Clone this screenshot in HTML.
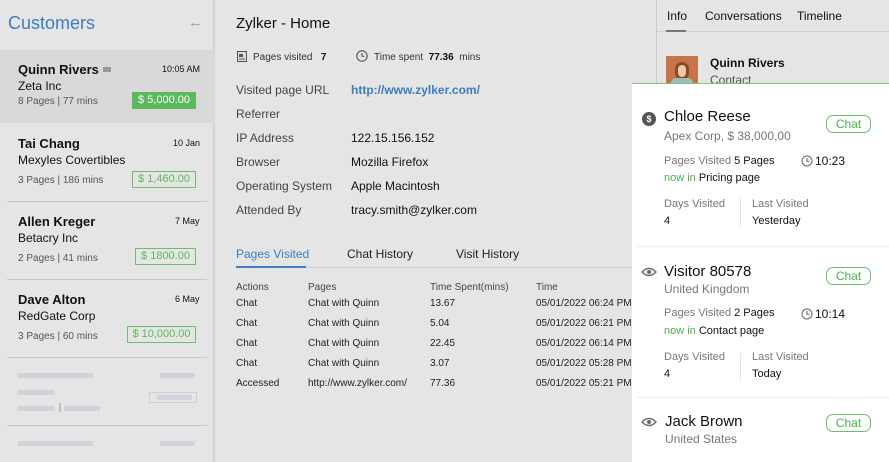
<!DOCTYPE html>
<html><head><meta charset="utf-8"><style>
*{margin:0;padding:0;box-sizing:border-box}
body{width:889px;height:462px;overflow:hidden;background:#e5e5e5;font-family:"Liberation Sans",sans-serif;color:#111;position:relative}
.a{position:absolute;white-space:nowrap}
.g{color:#555}
.tag{position:absolute;font-size:11px;color:#5cb85c;border:1px solid #6cc06c;text-align:center;height:17px;line-height:15px}
.bar{position:absolute;height:5px;background:#cfd3da}
.lbl{font-size:12px;color:#444}
.val{font-size:12px;color:#111}
.t{font-size:10px;color:#222}
.chat{position:absolute;left:826px;width:45px;height:18px;border:1px solid #6cc06c;border-radius:7px;color:#4cae4c;font-size:12px;text-align:center;line-height:16px}
</style></head><body>
<div class="a" style="left:0;top:0;width:215px;height:462px;background:#e5e5e5;border-right:2px solid #d2d2d2"></div>
<div class="a" style="left:8px;top:13px;font-size:18px;color:#3e7cc0">Customers</div>
<div class="a" style="left:188px;top:14px;font-size:15px;color:#999">←</div>
<div class="a" style="left:0;top:50px;width:215px;height:73px;background:#d9d9d9"></div>

<div class="a" style="left:18px;top:62px;font-size:13px;font-weight:bold">Quinn Rivers</div>
<div class="a" style="left:103px;top:67px;width:8px;height:5px;background:#999"></div>
<div class="a" style="left:162px;top:64px;font-size:9px">10:05 AM</div>
<div class="a" style="left:18px;top:79px;font-size:12px">Zeta Inc</div>
<div class="a g" style="left:18px;top:96px;font-size:10px">8 Pages | 77 mins</div>
<div class="tag" style="left:132px;top:92px;width:64px;background:#5cb85c;color:#fff;border-color:#5cb85c">$ 5,000.00</div>

<div class="a" style="left:18px;top:136px;font-size:13px;font-weight:bold">Tai Chang</div>
<div class="a" style="left:173px;top:138px;font-size:9px">10 Jan</div>
<div class="a" style="left:18px;top:153px;font-size:12px">Mexyles Covertibles</div>
<div class="a g" style="left:18px;top:175px;font-size:10px">3 Pages | 186 mins</div>
<div class="tag" style="left:132px;top:171px;width:64px">$ 1,460.00</div>
<div class="a" style="left:7px;top:201px;width:200px;height:1px;background:#c8c8c8"></div>

<div class="a" style="left:18px;top:214px;font-size:13px;font-weight:bold">Allen Kreger</div>
<div class="a" style="left:175px;top:216px;font-size:9px">7 May</div>
<div class="a" style="left:18px;top:231px;font-size:12px">Betacry Inc</div>
<div class="a g" style="left:18px;top:253px;font-size:10px">2 Pages | 41 mins</div>
<div class="tag" style="left:135px;top:248px;width:61px">$ 1800.00</div>
<div class="a" style="left:7px;top:279px;width:200px;height:1px;background:#c8c8c8"></div>

<div class="a" style="left:18px;top:292px;font-size:13px;font-weight:bold">Dave Alton</div>
<div class="a" style="left:175px;top:294px;font-size:9px">6 May</div>
<div class="a" style="left:18px;top:309px;font-size:12px">RedGate Corp</div>
<div class="a g" style="left:18px;top:331px;font-size:10px">3 Pages | 60 mins</div>
<div class="tag" style="left:127px;top:326px;width:69px">$ 10,000.00</div>
<div class="a" style="left:7px;top:357px;width:200px;height:1px;background:#c8c8c8"></div>

<div class="bar" style="left:18px;top:373px;width:75px"></div>
<div class="bar" style="left:160px;top:373px;width:35px"></div>
<div class="bar" style="left:18px;top:390px;width:36px"></div>
<div class="a" style="left:149px;top:392px;width:48px;height:11px;border:1px solid #d0d0d0"></div>
<div class="bar" style="left:157px;top:395px;width:35px"></div>
<div class="bar" style="left:18px;top:406px;width:36px"></div>
<div class="a" style="left:59px;top:403px;width:2px;height:9px;background:#b8c0cc"></div>
<div class="bar" style="left:64px;top:406px;width:36px"></div>
<div class="a" style="left:7px;top:425px;width:200px;height:1px;background:#c8c8c8"></div>
<div class="bar" style="left:18px;top:441px;width:75px"></div>
<div class="bar" style="left:160px;top:441px;width:35px"></div>

<div class="a" style="left:236px;top:15px;font-size:15px">Zylker - Home</div>
<svg class="a" style="left:237px;top:51px" width="10" height="11"><rect x="0.5" y="0.5" width="9" height="10" fill="#ddd" stroke="#555"/><rect x="2" y="3" width="4" height="3" fill="#555"/><path d="M2 8h6" stroke="#555"/></svg>
<div class="a" style="left:253px;top:52px;font-size:10px;color:#333">Pages visited &nbsp;&nbsp;<b style="color:#111">7</b></div>
<svg class="a" style="left:356px;top:50px" width="12" height="12"><circle cx="6" cy="6" r="5.2" fill="none" stroke="#444"/><path d="M6 3v3.3h2.5" fill="none" stroke="#444"/></svg>
<div class="a" style="left:374px;top:52px;font-size:10px;color:#333">Time spent &nbsp;<b style="color:#111">77.36</b> &nbsp;mins</div>

<div class="a lbl" style="left:236px;top:83px">Visited page URL</div>
<div class="a" style="left:351px;top:83px;font-size:12px;font-weight:bold;color:#3e7cc0">http://www.zylker.com/</div>
<div class="a lbl" style="left:236px;top:107px">Referrer</div>
<div class="a lbl" style="left:236px;top:131px">IP Address</div><div class="a val" style="left:351px;top:131px">122.15.156.152</div>
<div class="a lbl" style="left:236px;top:155px">Browser</div><div class="a val" style="left:351px;top:155px">Mozilla Firefox</div>
<div class="a lbl" style="left:236px;top:179px">Operating System</div><div class="a val" style="left:351px;top:179px">Apple Macintosh</div>
<div class="a lbl" style="left:236px;top:203px">Attended By</div><div class="a val" style="left:351px;top:203px">tracy.smith@zylker.com</div>

<div class="a" style="left:236px;top:267px;width:396px;height:1px;background:#d0d0d0"></div>
<div class="a" style="left:236px;top:247px;font-size:12px;color:#3e7cc0">Pages Visited</div>
<div class="a" style="left:236px;top:266px;width:70px;height:2px;background:#3e7cc0"></div>
<div class="a" style="left:347px;top:247px;font-size:12px;color:#222">Chat History</div>
<div class="a" style="left:456px;top:247px;font-size:12px;color:#222">Visit History</div>

<div class="a t" style="left:236px;top:282px;color:#444">Actions</div>
<div class="a t" style="left:308px;top:282px;color:#444">Pages</div>
<div class="a t" style="left:430px;top:282px;color:#444">Time Spent(mins)</div>
<div class="a t" style="left:536px;top:282px;color:#444">Time</div>
<div class="a t" style="left:236px;top:298px">Chat</div><div class="a t" style="left:308px;top:298px">Chat with Quinn</div><div class="a t" style="left:430px;top:298px">13.67</div><div class="a t" style="left:536px;top:298px">05/01/2022 06:24 PM</div>
<div class="a t" style="left:236px;top:318px">Chat</div><div class="a t" style="left:308px;top:318px">Chat with Quinn</div><div class="a t" style="left:430px;top:318px">5.04</div><div class="a t" style="left:536px;top:318px">05/01/2022 06:21 PM</div>
<div class="a t" style="left:236px;top:338px">Chat</div><div class="a t" style="left:308px;top:338px">Chat with Quinn</div><div class="a t" style="left:430px;top:338px">22.45</div><div class="a t" style="left:536px;top:338px">05/01/2022 06:14 PM</div>
<div class="a t" style="left:236px;top:358px">Chat</div><div class="a t" style="left:308px;top:358px">Chat with Quinn</div><div class="a t" style="left:430px;top:358px">3.07</div><div class="a t" style="left:536px;top:358px">05/01/2022 05:28 PM</div>
<div class="a t" style="left:236px;top:378px">Accessed</div><div class="a t" style="left:308px;top:378px">http://www.zylker.com/</div><div class="a t" style="left:430px;top:378px">77.36</div><div class="a t" style="left:536px;top:378px">05/01/2022 05:21 PM</div>

<div class="a" style="left:656px;top:0;width:1px;height:90px;background:#c8c8c8"></div>
<div class="a" style="left:657px;top:31px;width:232px;height:1px;background:#d0d0d0"></div>
<div class="a" style="left:667px;top:9px;font-size:12px">Info</div>
<div class="a" style="left:666px;top:30px;width:20px;height:2px;background:#777"></div>
<div class="a" style="left:705px;top:9px;font-size:12px">Conversations</div>
<div class="a" style="left:797px;top:9px;font-size:12px">Timeline</div>
<div class="a" style="left:666px;top:56px;width:32px;height:28px;background:#c8744a;overflow:hidden">
<div class="a" style="left:9px;top:6px;width:14px;height:18px;border-radius:7px;background:#f1c9a5;border:3px solid #8a4a2a"></div>
<div class="a" style="left:5px;top:22px;width:22px;height:10px;background:#9bbcb8;border-radius:5px 5px 0 0"></div></div>
<div class="a" style="left:710px;top:56px;font-size:12px;font-weight:bold">Quinn Rivers</div>
<div class="a" style="left:710px;top:73px;font-size:12px;color:#555">Contact</div>

<div class="a" style="left:632px;top:83px;width:257px;height:379px;background:#fff;border-top:1px solid #7cc47c"></div>
<div class="a" style="left:637px;top:246px;width:252px;height:1px;background:#eee"></div>
<div class="a" style="left:637px;top:397px;width:252px;height:1px;background:#eee"></div>

<div class="a" style="left:642px;top:112px;width:14px;height:14px;border-radius:50%;background:#555;color:#fff;font-size:9px;font-weight:bold;text-align:center;line-height:14px">$</div>
<div class="a" style="left:664px;top:108px;font-size:15px">Chloe Reese</div>
<div class="chat" style="top:115px">Chat</div>
<div class="a" style="left:664px;top:129px;font-size:12px;color:#777">Apex Corp, $ 38,000,00</div>
<div class="a" style="left:664px;top:155px;font-size:11px;color:#777">Pages Visited <span style="color:#111">5 Pages</span></div>
<svg class="a" style="left:801px;top:155px" width="12" height="12"><circle cx="6" cy="6" r="5" fill="none" stroke="#666"/><path d="M6 3v3.3h2.5" fill="none" stroke="#666"/></svg>
<div class="a" style="left:815px;top:154px;font-size:12px">10:23</div>
<div class="a" style="left:664px;top:172px;font-size:11px;color:#4cae4c">now in <span style="color:#111">Pricing page</span></div>
<div class="a" style="left:664px;top:198px;font-size:11px;color:#777">Days Visited</div>
<div class="a" style="left:664px;top:215px;font-size:11px">4</div>
<div class="a" style="left:740px;top:198px;width:1px;height:28px;background:#e5e5e5"></div>
<div class="a" style="left:752px;top:198px;font-size:11px;color:#777">Last Visited</div>
<div class="a" style="left:752px;top:215px;font-size:11px">Yesterday</div>

<svg class="a" style="left:641px;top:267px" width="16" height="10"><path d="M1 5Q8 -2 15 5Q8 12 1 5Z" fill="none" stroke="#666" stroke-width="1.3"/><circle cx="8" cy="5" r="2" fill="#666"/></svg>
<div class="a" style="left:664px;top:263px;font-size:15px">Visitor 80578</div>
<div class="chat" style="top:267px">Chat</div>
<div class="a" style="left:664px;top:282px;font-size:12px;color:#777">United Kingdom</div>
<div class="a" style="left:664px;top:307px;font-size:11px;color:#777">Pages Visited <span style="color:#111">2 Pages</span></div>
<svg class="a" style="left:801px;top:308px" width="12" height="12"><circle cx="6" cy="6" r="5" fill="none" stroke="#666"/><path d="M6 3v3.3h2.5" fill="none" stroke="#666"/></svg>
<div class="a" style="left:815px;top:307px;font-size:12px">10:14</div>
<div class="a" style="left:664px;top:325px;font-size:11px;color:#4cae4c">now in <span style="color:#111">Contact page</span></div>
<div class="a" style="left:664px;top:351px;font-size:11px;color:#777">Days Visited</div>
<div class="a" style="left:664px;top:368px;font-size:11px">4</div>
<div class="a" style="left:740px;top:353px;width:1px;height:28px;background:#e5e5e5"></div>
<div class="a" style="left:752px;top:351px;font-size:11px;color:#777">Last Visited</div>
<div class="a" style="left:752px;top:368px;font-size:11px">Today</div>

<svg class="a" style="left:641px;top:417px" width="16" height="10"><path d="M1 5Q8 -2 15 5Q8 12 1 5Z" fill="none" stroke="#666" stroke-width="1.3"/><circle cx="8" cy="5" r="2" fill="#666"/></svg>
<div class="a" style="left:665px;top:413px;font-size:15px">Jack Brown</div>
<div class="chat" style="top:414px">Chat</div>
<div class="a" style="left:665px;top:432px;font-size:12px;color:#777">United States</div>
</body></html>
